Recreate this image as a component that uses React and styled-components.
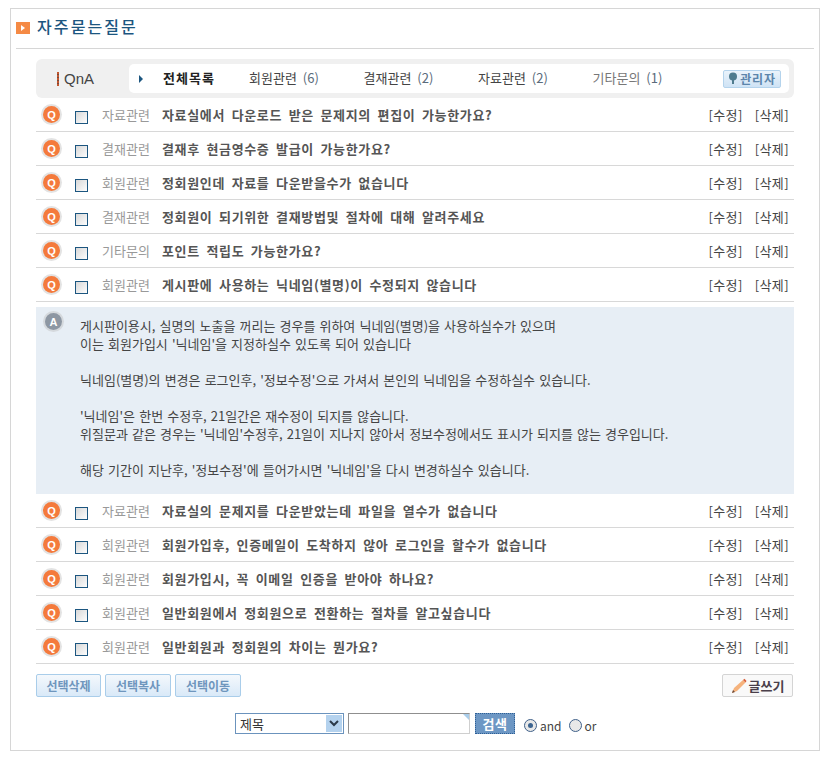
import React from "react";
import styled, { createGlobalStyle } from "styled-components";

const GlobalStyle = createGlobalStyle`
  html, body { margin: 0; padding: 0; background: #fff; }
  body { font-family: "Noto Sans CJK KR", "Noto Sans", sans-serif; font-size: 13px; color: #333; }
  * { box-sizing: border-box; }
`;

const questionsTop = [
  ["자료관련", "자료실에서 다운로드 받은 문제지의 편집이 가능한가요?"],
  ["결재관련", "결재후 현금영수증 발급이 가능한가요?"],
  ["회원관련", "정회원인데 자료를 다운받을수가 없습니다"],
  ["결재관련", "정회원이 되기위한 결재방법및 절차에 대해 알려주세요"],
  ["기타문의", "포인트 적립도 가능한가요?"],
  ["회원관련", "게시판에 사용하는 닉네임(별명)이 수정되지 않습니다"],
];

const questionsBottom = [
  ["자료관련", "자료실의 문제지를 다운받았는데 파일을 열수가 없습니다"],
  ["회원관련", "회원가입후, 인증메일이 도착하지 않아 로그인을 할수가 없습니다"],
  ["회원관련", "회원가입시, 꼭 이메일 인증을 받아야 하나요?"],
  ["회원관련", "일반회원에서 정회원으로 전환하는 절차를 알고싶습니다"],
  ["회원관련", "일반회원과 정회원의 차이는 뭔가요?"],
];

const answerLines = [
  "게시판이용시, 실명의 노출을 꺼리는 경우를 위하여 닉네임(별명)을 사용하실수가 있으며",
  "이는 회원가입시 '닉네임'을 지정하실수 있도록 되어 있습니다",
  "",
  "닉네임(별명)의 변경은 로그인후, '정보수정'으로 가셔서 본인의 닉네임을 수정하실수 있습니다.",
  "",
  "'닉네임'은 한번 수정후, 21일간은 재수정이 되지를 않습니다.",
  "위질문과 같은 경우는 '닉네임'수정후, 21일이 지나지 않아서 정보수정에서도 표시가 되지를 않는 경우입니다.",
  "",
  "해당 기간이 지난후, '정보수정'에 들어가시면 '닉네임'을 다시 변경하실수 있습니다.",
];

const tabs = [
  ["회원관련", 6],
  ["결재관련", 2],
  ["자료관련", 2],
  ["기타문의", 1],
];

const Frame = styled.div`
  width: 810px;
  height: 743px;
  margin: 8px 0 0 10px;
  padding: 0 5px;
  border: 1px solid #d6d6d6;
`;

const TitleBar = styled.div`
  height: 40px;
  display: flex;
  align-items: center;
  gap: 7px;
  padding-bottom: 5px;
  border-bottom: 1px solid #d6d6d6;
`;

const TitleIcon = styled.span`
  width: 14px;
  height: 12px;
  margin-top: 3px;
  background: #f58a45;
  display: flex;
  align-items: center;
  justify-content: center;
  &::after {
    content: "";
    border-left: 4px solid #fff;
    border-top: 3px solid transparent;
    border-bottom: 3px solid transparent;
  }
`;

const Title = styled.h1`
  margin: 0;
  font-size: 16px;
  font-weight: 500;
  letter-spacing: 2.1px;
  color: #1c5680;
`;

const Content = styled.div`
  margin: 10px 20px 0;
  width: 758px;
`;

const CategoryBar = styled.div`
  height: 39px;
  background: #f0f0f0;
  border-radius: 6px;
  padding: 5px 5px 5px 0;
  display: flex;
`;

const Logo = styled.div`
  width: 93px;
  display: flex;
  align-items: center;
  padding: 0 0 0 21px;
  gap: 5px;
  font-family: "Liberation Sans", sans-serif;
  font-size: 15px;
  color: #444;
  &::before {
    content: "";
    width: 2px;
    height: 14px;
    background: repeating-linear-gradient(#c2562f 0 2px, #7a4a3a 2px 3px);
  }
`;

const TabPanel = styled.div`
  flex: 1;
  background: #fff;
  border-radius: 5px;
  display: flex;
  align-items: center;
  padding: 0 8px 2px 10px;
`;

const TabArrow = styled.span`
  width: 24px;
  padding-top: 2px;
  &::before {
    content: "";
    display: block;
    border-left: 4px solid #1c5680;
    border-top: 4px solid transparent;
    border-bottom: 4px solid transparent;
    width: 0;
  }
`;

const AllTab = styled.span`
  width: 86px;
  font-weight: 700;
  font-size: 13px;
  color: #222;
  letter-spacing: 1px;
`;

const Tab = styled.span`
  width: 114.5px;
  color: ${(p) => p.$color};
  font-size: 13px;
  word-spacing: 3px;
`;

const Count = styled.span`
  color: #5a6b7b;
`;

const AdminButton = styled.span`
  margin-left: auto;
  margin-top: 2px;
  width: 58px;
  height: 18px;
  background: linear-gradient(#eaf3fb, #cfe3f5);
  border: 1px solid #b4d3ec;
  border-radius: 2px;
  display: flex;
  align-items: center;
  justify-content: center;
  gap: 2px;
  font-size: 12px;
  font-weight: 700;
  letter-spacing: 0.8px;
  color: #5c85ab;
`;

const Row = styled.div`
  height: 34px;
  display: flex;
  align-items: center;
  padding: 0 5px;
  border-bottom: 1px solid #d8d8d8;
`;

const Badge = styled.span`
  width: 17px;
  height: 17px;
  flex: none;
  margin: 2px;
  border-radius: 50%;
  display: flex;
  align-items: center;
  justify-content: center;
  font-family: "Liberation Sans", sans-serif;
  font-size: 11px;
  font-weight: 700;
  color: #fff;
  background: ${(p) => p.$bg};
  box-shadow: 0 0 0 2px ${(p) => p.$ring};
`;

const Check = styled.input.attrs({ type: "checkbox" })`
  appearance: none;
  width: 13px;
  height: 13px;
  flex: none;
  margin: 6px 14px 0 13px;
  border: 1px solid #1c5680;
  background: linear-gradient(135deg, #d8d8d8, #fdfdfd);
`;

const Category = styled.span`
  width: 60px;
  flex: none;
  color: #999;
  font-size: 13px;
`;

const Question = styled.span`
  flex: 1;
  font-size: 13px;
  font-weight: 700;
  color: #555;
  letter-spacing: 0.65px;
  word-spacing: 3px;
  white-space: nowrap;
`;

const Actions = styled.span`
  display: flex;
  gap: 12px;
  color: #444;
  font-size: 13px;
  letter-spacing: 0.4px;
`;

const Answer = styled.div`
  height: 187px;
  margin-top: 5px;
  background: #e7eef5;
  display: flex;
  align-items: flex-start;
  padding: 4px 0 0 7px;
`;

const AnswerText = styled.div`
  margin-left: 16px;
  padding-top: 6px;
  line-height: 18px;
  font-size: 13px;
  color: #444;
  white-space: pre;
  word-spacing: 1.2px;
`;

const ActionBar = styled.div`
  display: flex;
  gap: 4px;
  margin-top: 10px;
  height: 23px;
`;

const ListButton = styled.button`
  width: ${(p) => p.$w}px;
  height: 23px;
  padding: 0;
  border: 1px solid #a9cdea;
  border-radius: 2px;
  background: linear-gradient(#f4f8fc, #d9e9f8);
  font-family: inherit;
  font-size: 12px;
  font-weight: 700;
  color: #6f96bd;
`;

const WriteButton = styled.button`
  margin-left: auto;
  margin-right: 1px;
  width: 71px;
  height: 23px;
  padding: 0;
  border: 1px solid #d4d4d4;
  border-radius: 2px;
  background: #f9f9f9;
  display: flex;
  align-items: center;
  justify-content: center;
  gap: 2px;
  font-family: inherit;
  font-size: 13px;
  font-weight: 700;
  color: #4a3f4a;
`;

const SearchBar = styled.div`
  display: flex;
  align-items: center;
  height: 21px;
  margin: 16px 0 0 199px;
`;

const SelectBox = styled.div`
  width: 109px;
  height: 21px;
  border: 1px solid #6b93bd;
  display: flex;
  align-items: center;
  justify-content: space-between;
  padding: 1px 1px 1px 4px;
  font-size: 13px;
  color: #333;
`;

const SelectArrow = styled.span`
  width: 16px;
  height: 17px;
  background: #b4d2ee;
  display: flex;
  align-items: center;
  justify-content: center;
`;

const SearchInput = styled.div`
  position: relative;
  width: 122px;
  height: 21px;
  margin-left: 4px;
  border: 1px solid #cfcfcf;
  border-top: 1px solid #8f8f8f;
  border-left: 1px solid #8f8f8f;
  &::after {
    content: "";
    position: absolute;
    top: 0;
    right: 0;
    border-top: 6px solid #a9cdea;
    border-left: 6px solid transparent;
  }
`;

const SearchButton = styled.button`
  width: 40px;
  height: 21px;
  margin-left: 5px;
  padding: 0;
  border: 1px dotted #2d5f95;
  background: #6d97c4;
  font-family: inherit;
  font-size: 13px;
  font-weight: 700;
  color: #fff;
  letter-spacing: 0.5px;
`;

const Radio = styled.span`
  width: 13px;
  height: 13px;
  margin: 3px 0 0 ${(p) => p.$ml}px;
  border-radius: 50%;
  border: 1px solid #40618a;
  background: #e8e8e8;
  display: flex;
  align-items: center;
  justify-content: center;
  &::after {
    content: "";
    width: 5px;
    height: 5px;
    border-radius: 50%;
    background: ${(p) => (p.$on ? "#3c6490" : "transparent")};
  }
`;

const RadioLabel = styled.span`
  margin-left: 3px;
  font-size: 12px;
  color: #444;
  padding-top: 3px;
`;

const QuestionRow = ({ item }) => (
  <Row>
    <Badge $bg="#f47a3c" $ring="#e3e3e3">Q</Badge>
    <Check />
    <Category>{item[0]}</Category>
    <Question>{item[1]}</Question>
    <Actions>
      <span>[수정]</span>
      <span>[삭제]</span>
    </Actions>
  </Row>
);

export default function App() {
  return (
    <>
      <GlobalStyle />
      <Frame>
        <TitleBar>
          <TitleIcon />
          <Title>자주묻는질문</Title>
        </TitleBar>
        <Content>
          <CategoryBar>
            <Logo>QnA</Logo>
            <TabPanel>
              <TabArrow />
              <AllTab>전체목록</AllTab>
              {tabs.map((t, i) => (
                <Tab key={t[0]} $color={i === 3 ? "#777" : "#444"}>
                  {t[0]} <Count>({t[1]})</Count>
                </Tab>
              ))}
              <AdminButton>
                <svg width="10" height="13" viewBox="0 0 10 13">
                  <circle cx="5" cy="4.5" r="4" fill="#4f7c8f" />
                  <rect x="4" y="8" width="2" height="4" fill="#4f7c8f" />
                </svg>
                관리자
              </AdminButton>
            </TabPanel>
          </CategoryBar>

          {questionsTop.map((q) => <QuestionRow key={q[1]} item={q} />)}

          <Answer>
            <Badge $bg="#8d97a3" $ring="#d5d9dd">A</Badge>
            <AnswerText>{answerLines.join("\n")}</AnswerText>
          </Answer>

          {questionsBottom.map((q) => <QuestionRow key={q[1]} item={q} />)}

          <ActionBar>
            <ListButton $w={65}>선택삭제</ListButton>
            <ListButton $w={66}>선택복사</ListButton>
            <ListButton $w={66}>선택이동</ListButton>
            <WriteButton>
              <svg width="16" height="16" viewBox="0 0 16 16">
                <path d="M1 15 L3 10 L12 2 L14.5 4.5 L6 13 Z" fill="#f5b27c" />
                <path d="M1 15 L2 12 L4 14 Z" fill="#6b4a3a" />
                <path d="M12 2 L13.5 0.8 L15.5 3 L14.5 4.5 Z" fill="#d9603a" />
              </svg>
              글쓰기
            </WriteButton>
          </ActionBar>

          <SearchBar>
            <SelectBox>
              제목
              <SelectArrow>
                <svg width="10" height="7" viewBox="0 0 10 7">
                  <path d="M1 1 L5 5 L9 1" fill="none" stroke="#2b3a4a" strokeWidth="2" />
                </svg>
              </SelectArrow>
            </SelectBox>
            <SearchInput />
            <SearchButton>검색</SearchButton>
            <Radio $ml={9} $on />
            <RadioLabel>and</RadioLabel>
            <Radio $ml={7} />
            <RadioLabel>or</RadioLabel>
          </SearchBar>
        </Content>
      </Frame>
    </>
  );
}
